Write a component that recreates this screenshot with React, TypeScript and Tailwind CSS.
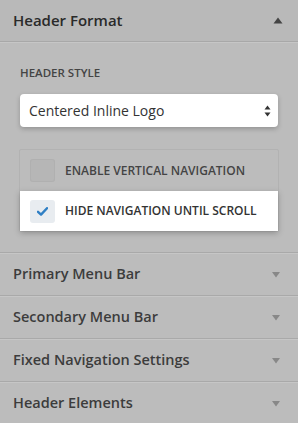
const Caret = ({ up }: { up?: boolean }) => (
  <svg width="10" height="7" viewBox="0 0 10 7" className={up ? "text-[#444]" : "text-[#888]"}>
    {up ? <path d="M5 0.5 L9.5 6.5 H0.5 Z" fill="currentColor" /> : <path d="M1 1 H9 L5 6.5 Z" fill="currentColor" />}
  </svg>
);

const Row = ({ title }: { title: string }) => (
  <div className="flex items-center justify-between h-[43px] pl-[13px] pr-[17px] border-t border-[#a9a9a9] shadow-[inset_0_1px_0_#c6c6c6]">
    <span className="text-[14.5px] font-semibold text-[#3c3c3c]">{title}</span>
    <Caret />
  </div>
);

export default function App() {
  return (
    <div className="w-[298px] h-[423px] overflow-hidden bg-[#bcbcbc] font-['Open_Sans',sans-serif]">
      <div className="flex items-center justify-between h-[42px] pl-[13px] pr-[15px] bg-[#b9b9b9] border-b border-[#a8a8a8]">
        <span className="text-[15px] font-semibold text-[#2a2a2a]">Header Format</span>
        <Caret up />
      </div>
      <div className="h-[210px] pt-[22px] px-[20px] border-t border-[#c6c6c6]">
        <div className="text-[11.5px] font-semibold text-[#444] leading-[16px]">HEADER STYLE</div>
        <div className="mt-[13px] h-[33px] bg-white rounded-[4px] shadow-[0_2px_5px_rgba(0,0,0,0.22)] flex items-center justify-between pl-[9px] pr-[7px]">
          <span className="text-[14px] text-[#333]">Centered Inline Logo</span>
          <svg width="7" height="12" viewBox="0 0 7 12">
            <path d="M3.5 0.5 L6.5 4.5 H0.5 Z M0.5 7.5 H6.5 L3.5 11.5 Z" fill="#333" />
          </svg>
        </div>
        <div className="mt-[22px] border border-[#b2b2b2] rounded-[2px] -mx-[1px]">
          <div className="flex items-center h-[41px] pl-[10px]">
            <div className="w-[25px] h-[23px] rounded-[3px] bg-[#b6b6b6] shadow-[inset_0_0_0_1px_#b0b0b0]" />
            <span className="ml-[10px] text-[12px] font-semibold text-[#444]">ENABLE VERTICAL NAVIGATION</span>
          </div>
          <div className="flex items-center h-[40px] pl-[10px] bg-white shadow-[0_2px_6px_rgba(0,0,0,0.25)]">
            <div className="w-[25px] h-[23px] rounded-[3px] bg-[#e8ecf0] flex items-center justify-center">
              <svg width="11" height="9" viewBox="0 0 11 9">
                <path d="M1 4.8 L4 7.6 L10 1.2" stroke="#2f7fc4" strokeWidth="2.4" fill="none" strokeLinecap="round" strokeLinejoin="round" />
              </svg>
            </div>
            <span className="ml-[10px] text-[12px] font-semibold text-[#333]">HIDE NAVIGATION UNTIL SCROLL</span>
          </div>
        </div>
      </div>
      <Row title="Primary Menu Bar" />
      <Row title="Secondary Menu Bar" />
      <Row title="Fixed Navigation Settings" />
      <Row title="Header Elements" />
    </div>
  );
}
